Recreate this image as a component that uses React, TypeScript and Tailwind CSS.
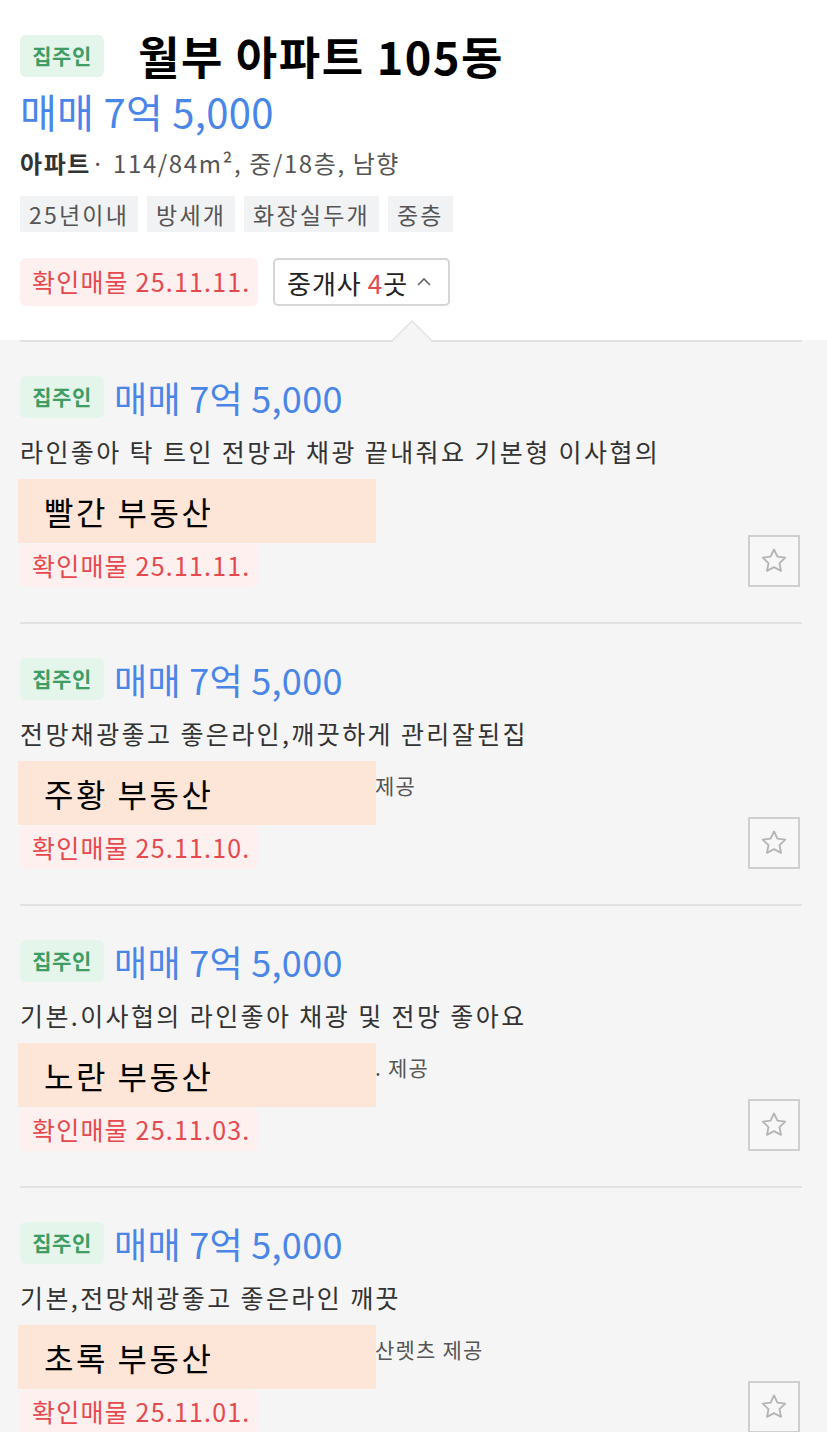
import React from "react";

const FONT = { fontFamily: '"Noto Sans CJK KR", "Noto Sans", sans-serif' };

function OwnerBadge() {
  return (
    <span className="inline-flex h-[42px] w-[84px] shrink-0 items-center justify-center rounded-[6px] bg-[#e4f6ec] text-[21px] font-bold tracking-[0.5px] text-[#3f9c63]">
      집주인
    </span>
  );
}

function Verified({ date, tall }: { date: string; tall?: boolean }) {
  return (
    <span
      className={`inline-flex w-[238px] items-center rounded-[6px] bg-[#fff0f0] pl-[12px] text-[25px] tracking-[1.2px] text-[#e5484d] ${
        tall ? "h-[48px]" : "h-[43px]"
      }`}
    >
      확인매물 {date}
    </span>
  );
}

function StarButton() {
  return (
    <button className="-mt-[9px] flex h-[52px] w-[52px] items-center justify-center border-[2px] border-[#cfcfcf] bg-[#f7f7f7]">
      <svg width="30" height="30" viewBox="0 0 24 24" fill="none" stroke="#b5b5b5" strokeWidth="1.5" strokeLinejoin="round">
        <path d="M12 2.8l2.75 5.75 6.25.8-4.6 4.35 1.2 6.2L12 16.9l-5.6 3 1.2-6.2L3 9.35l6.25-.8z" />
      </svg>
    </button>
  );
}

type Item = {
  desc: string;
  agent: string;
  source: string;
  date: string;
};

const items: Item[] = [
  { desc: "라인좋아 탁 트인 전망과 채광 끝내줘요 기본형 이사협의", agent: "빨간 부동산", source: "", date: "25.11.11." },
  { desc: "전망채광좋고 좋은라인,깨끗하게 관리잘된집", agent: "주황 부동산", source: "제공", date: "25.11.10." },
  { desc: "기본.이사협의 라인좋아 채광 및 전망 좋아요", agent: "노란 부동산", source: ". 제공", date: "25.11.03." },
  { desc: "기본,전망채광좋고 좋은라인 깨끗", agent: "초록 부동산", source: "산렛츠 제공", date: "25.11.01." },
];

function ListingItem({ item }: { item: Item }) {
  return (
    <div className="ml-5 mr-[25px] border-t-[2px] border-[#e2e2e2] pt-[34px] pb-[35px]">
      <div className="flex h-[42px] items-center gap-[10px]">
        <OwnerBadge />
        <span className="text-[36px] leading-[42px] tracking-[0.3px] text-[#4a86e8]">매매 7억 5,000</span>
      </div>
      <p className="mt-[18px] text-[25px] leading-[30px] tracking-[2.4px] text-[#333]">{item.desc}</p>
      <div className="relative mt-[13px] flex h-[64px] items-center pb-[14px] pl-[355px] text-[21px] tracking-[1.2px] text-[#555]">
        {item.source}
        <div className="absolute left-[-2px] top-0 flex h-[64px] w-[358px] items-center bg-[#fde5d7] pl-[26px] text-[32px] tracking-[2.5px] text-black">
          {item.agent}
        </div>
      </div>
      <div className="mt-[1px] flex items-end justify-between pr-[2px]">
        <Verified date={item.date} />
        <StarButton />
      </div>
    </div>
  );
}

export default function App() {
  return (
    <div className="min-h-[1432px] w-[827px] overflow-hidden bg-[#f5f5f5]" style={FONT}>
      <div className="bg-white px-5 pt-[35px] pb-[34px]">
        <div className="flex h-[42px] items-center">
          <OwnerBadge />
          <h1 className="ml-[34px] text-[45px] font-bold leading-[42px] tracking-[1.6px] text-black">월부 아파트 105동</h1>
        </div>
        <div className="mt-[12px] text-[40px] leading-[44px] tracking-[0.3px] text-[#4a86e8]">매매 7억 5,000</div>
        <div className="mt-[15px] text-[24px] leading-[30px] tracking-[1.6px] text-[#555]">
          <span className="font-bold text-[#333]">아파트</span>· 114/84m², 중/18층, 남향
        </div>
        <div className="mt-[18px] flex gap-[9px]">
          {["25년이내", "방세개", "화장실두개", "중층"].map((t) => (
            <span key={t} className="flex h-[36px] items-center bg-[#f1f2f4] px-[9px] text-[23px] tracking-[2.2px] text-[#555]">
              {t}
            </span>
          ))}
        </div>
        <div className="mt-[26px] flex items-center gap-[15px]">
          <Verified date="25.11.11." tall />
          <button className="flex h-[48px] w-[177px] items-center rounded-[5px] border-[2px] border-[#d6d6d6] bg-white pl-[12px] text-[26px] tracking-[1px] text-[#222]">
            중개사 <span className="ml-[6px] text-[#e5484d]">4</span>곳
            <svg className="ml-[8px]" width="16" height="10" viewBox="0 0 16 10" fill="none" stroke="#666" strokeWidth="1.6">
              <path d="M2 8l6-6 6 6" />
            </svg>
          </button>
        </div>
      </div>
      <div className="relative">
        <svg className="absolute left-[392px] top-[-20px]" width="40" height="22" viewBox="0 0 40 22">
          <polygon points="0,22 20,1 40,22" fill="#f5f5f5" />
          <polyline points="0,21 20,1 40,21" fill="none" stroke="#e2e2e2" strokeWidth="1.5" />
        </svg>
        {items.map((it, i) => (
          <ListingItem key={i} item={it} />
        ))}
      </div>
    </div>
  );
}
